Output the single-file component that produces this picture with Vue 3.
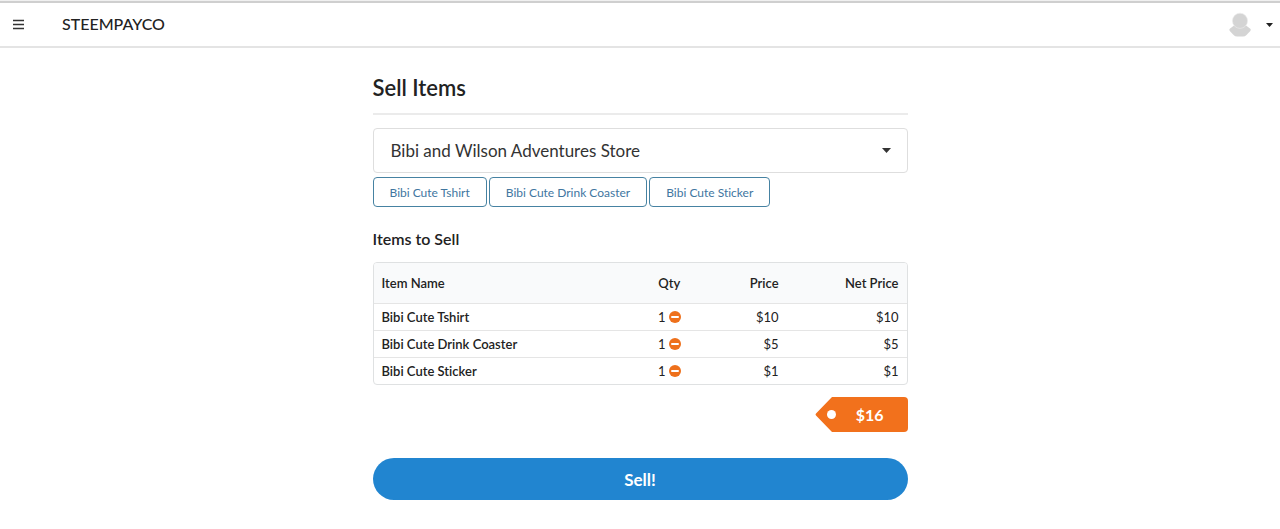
<script setup>
import { computed, ref } from 'vue'

const store = ref('Bibi and Wilson Adventures Store')
const stores = ['Bibi and Wilson Adventures Store']

const products = [
  { name: 'Bibi Cute Tshirt', price: 10 },
  { name: 'Bibi Cute Drink Coaster', price: 5 },
  { name: 'Bibi Cute Sticker', price: 1 }
]

const cart = ref(products.map((p) => ({ ...p, qty: 1 })))
const total = computed(() => cart.value.reduce((sum, i) => sum + i.qty * i.price, 0))

function add(product) {
  const line = cart.value.find((i) => i.name === product.name)
  if (line) line.qty++
  else cart.value.push({ ...product, qty: 1 })
}

function remove(item) {
  item.qty--
  cart.value = cart.value.filter((i) => i.qty > 0)
}
</script>

<template>
  <header class="topbar">
    <button class="icon-button" type="button" aria-label="Menu">
      <svg width="12" height="12" viewBox="0 0 12 12">
        <path d="M1 1.500h11M1 5.500h11M1 9.500h11" stroke="#333" stroke-width="1.6" />
      </svg>
    </button>
    <a class="brand" href="#">STEEMPAYCO</a>
    <button class="icon-button account" type="button" aria-label="Account">
      <svg width="22" height="26" viewBox="0 0 22 26" fill="#d4d4d4">
        <path d="M5 13.500L.8 16.800q-.9 1 0 2.200l3.800 4q1.500 1.500 3.500 1.500H14q2 0 3.500-1.500l3.800-4q.9-1.200 0-2.200L17 13.500z" />
        <circle cx="11" cy="8.800" r="7.600" stroke="#ececec" stroke-width=".6" />
      </svg>
      <svg width="7" height="4" viewBox="0 0 7 4"><path d="M0 0h7L3.500 4z" fill="#222" /></svg>
    </button>
  </header>

  <main class="page">
    <h1>Sell Items</h1>

    <div class="picker">
      <select v-model="store" aria-label="Store">
        <option v-for="s in stores" :key="s">{{ s }}</option>
      </select>
      <svg class="caret" width="9" height="5" viewBox="0 0 9 5"><path d="M0 0h9L4.500 5z" fill="#333" /></svg>
    </div>

    <div class="products">
      <button v-for="p in products" :key="p.name" type="button" @click="add(p)">{{ p.name }}</button>
    </div>

    <h2>Items to Sell</h2>

    <div class="table-frame">
      <table>
        <thead>
          <tr>
            <th class="name" scope="col">Item Name</th>
            <th class="qty" scope="col">Qty</th>
            <th class="price" scope="col">Price</th>
            <th class="net" scope="col">Net Price</th>
          </tr>
        </thead>
        <tbody>
          <tr v-for="item in cart" :key="item.name">
            <th class="name" scope="row">{{ item.name }}</th>
            <td class="qty">
              <span class="qty-cell">
                {{ item.qty }}
                <button class="remove" type="button" :aria-label="`Remove one ${item.name}`" @click="remove(item)">
                  <svg width="12" height="12" viewBox="0 0 12 12">
                    <circle cx="6" cy="6" r="6" fill="#ee701b" />
                    <path d="M3 6h6" stroke="#fff" stroke-width="2" stroke-linecap="round" />
                  </svg>
                </button>
              </span>
            </td>
            <td class="price">${{ item.price }}</td>
            <td class="net">${{ item.price * item.qty }}</td>
          </tr>
        </tbody>
      </table>
    </div>

    <div class="total">
      <svg width="17" height="35" viewBox="0 0 17 35">
        <path d="M17 0L1 16.500Q0 17.500 1 18.500L17 35z" fill="#f2711c" />
      </svg>
      <span class="amount">${{ total }}</span>
    </div>

    <button class="sell" type="button">Sell!</button>
  </main>
</template>

<style>
body {
  margin: 0;
  background: #fff;
}
</style>

<style scoped>
.topbar,
.page {
  font-family: Lato, "Liberation Sans", sans-serif;
  font-variant-ligatures: none;
  color: #222;
}

button {
  font-family: inherit;
  font-variant-ligatures: none;
  cursor: pointer;
}

.topbar {
  display: flex;
  align-items: center;
  box-sizing: border-box;
  height: 48px;
  padding: 2px 7px 0 12px;
  border-top: 1px solid #f0f0f0;
  border-bottom: 2px solid #e4e4e4;
  box-shadow: inset 0 2px 0 #cfcfcf;
}

.icon-button {
  display: flex;
  align-items: center;
  padding: 0;
  border: 0;
  background: none;
}

.brand {
  margin-left: 38px;
  padding-bottom: 2px;
  font-size: 16px;
  line-height: 24px;
  color: #222;
  text-decoration: none;
  font-weight: 500;
}

.account {
  gap: 15px;
  margin-left: auto;
}

.page {
  box-sizing: border-box;
  max-width: 535px;
  margin: 0 auto;
  padding: 26px 0 28px;
}

h1 {
  margin: 0 0 13px;
  padding-bottom: 11px;
  border-bottom: 2px solid #ebebeb;
  font-size: 22px;
  line-height: 28px;
  font-weight: 600;
}

.picker {
  position: relative;
}

select {
  display: block;
  box-sizing: border-box;
  width: 100%;
  height: 45px;
  padding: 0 36px 0 17px;
  border: 1px solid #dedede;
  border-radius: 4px;
  appearance: none;
  background: #fff;
  color: #333;
  font-family: inherit;
  font-size: 17px;
}

.caret {
  position: absolute;
  top: 20px;
  right: 17px;
  pointer-events: none;
}

.products {
  display: flex;
  flex-wrap: wrap;
  gap: 2px;
  margin-top: 4px;
}

.products button {
  height: 30px;
  padding: 0 16px;
  border: 1px solid #4682a2;
  border-radius: 4px;
  background: #fff;
  color: #41769f;
  font-size: 12px;
}

h2 {
  margin: 20px 0 11px;
  font-size: 16px;
  line-height: 24px;
  font-weight: 600;
}

.table-frame {
  overflow: hidden;
  border: 1px solid #dfe1e2;
  border-radius: 4px;
}

table {
  width: 100%;
  border-collapse: collapse;
  table-layout: fixed;
  font-size: 13px;
  line-height: 18px;
}

th,
td {
  box-sizing: border-box;
  padding: 4px 8px;
  font-weight: 400;
  text-align: right;
}

th {
  font-weight: 600;
}

thead th {
  padding: 11px 8px;
  background: #f9fafb;
}

tbody tr {
  border-top: 1px solid #e5e5e5;
}

.name {
  width: 46%;
  text-align: left;
}

.qty {
  width: 19%;
  text-align: center;
}

.price {
  width: 12.5%;
}

.qty-cell {
  display: inline-flex;
  align-items: center;
  gap: 3px;
}

.remove {
  display: flex;
  padding: 0;
  border: 0;
  background: none;
}

.total {
  display: flex;
  justify-content: flex-end;
  position: relative;
  margin-top: 12px;
}

.total::before {
  content: "";
  position: absolute;
  top: 13px;
  right: 72px;
  width: 9px;
  height: 9px;
  border-radius: 50%;
  background: #fff;
}

.amount {
  padding: 0 24px;
  border-radius: 0 4px 4px 0;
  background: #f2711c;
  color: #fff;
  font-size: 16px;
  line-height: 35px;
  font-weight: 700;
}

.sell {
  display: block;
  width: 100%;
  height: 42px;
  margin-top: 26px;
  border: 0;
  border-radius: 21px;
  background: #2185d0;
  color: #fff;
  font-size: 17px;
  font-weight: 700;
}
</style>
